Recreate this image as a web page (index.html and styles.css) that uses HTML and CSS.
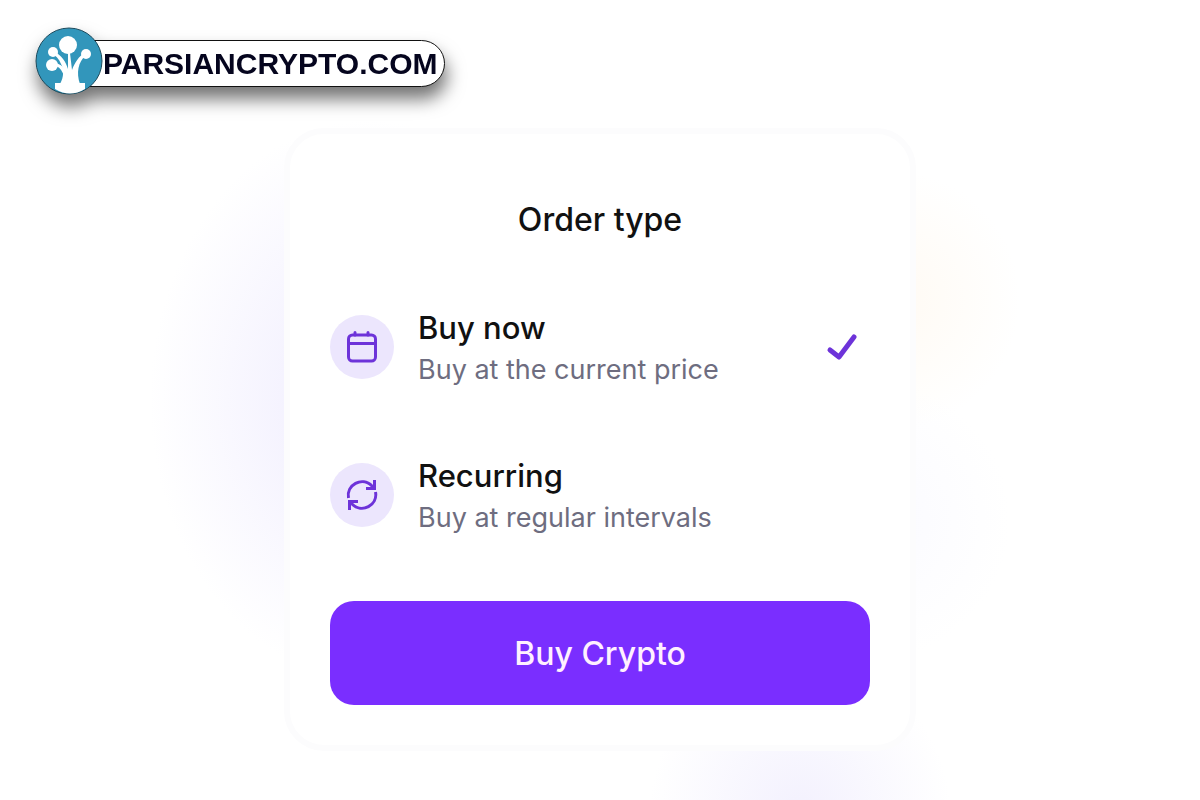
FILE: index.html
```
<!DOCTYPE html>
<html lang="en">
<head>
	<meta charset="utf-8">
	<meta name="viewport" content="width=device-width, initial-scale=1">
	<title>Order type</title>
	<link rel="stylesheet" href="styles.css">
</head>
<body>
	<header class="site-header">
		<a class="brand" href="#">
			<svg class="brand-logo" viewBox="0 0 68 68" aria-hidden="true">
				<circle cx="34" cy="34" r="33" fill="#3296bb" stroke="#1c4a5c" stroke-width="1"/>
				<path d="M20 56H50V62Q35 71 20 62Z" fill="#fff"/>
				<path d="M25 57C29 50 29 42 26 37C24 32 21 29 17 26L19 24C27 29 31 35 33 42L33 26H35L37 43C40 35 44 29 50 26L51 28C43 35 41 46 45 57Z" fill="#fff"/>
				<path d="M17 38C24 37 27 40 30 47" fill="none" stroke="#fff" stroke-width="3"/>
				<circle cx="33" cy="18" r="9" fill="#fff"/>
				<circle cx="18" cy="25" r="5" fill="#fff"/>
				<circle cx="17" cy="38" r="6" fill="#fff"/>
				<circle cx="51" cy="27" r="5" fill="#fff"/>
			</svg>
			<span class="brand-name">PARSIANCRYPTO.COM</span>
		</a>
	</header>

	<main>
		<form class="card">
			<h1 id="order-title">Order type</h1>

			<div class="options" role="radiogroup" aria-labelledby="order-title">
				<label class="option">
					<input type="radio" name="order" value="now" checked>
					<span class="option-icon">
						<svg viewBox="0 0 32 32" aria-hidden="true">
							<rect x="2.5" y="4" width="27" height="26" rx="4"/>
							<path d="M2.5 12.5H29.5M9 1.5V4M22 1.5V4"/>
						</svg>
					</span>
					<span class="option-text">
						<span class="option-name">Buy now</span>
						<span class="option-info">Buy at the current price</span>
					</span>
					<svg class="check" viewBox="0 0 32 32" aria-hidden="true"><path d="M4 19L13 26L28 6"/></svg>
				</label>

				<label class="option">
					<input type="radio" name="order" value="recurring">
					<span class="option-icon">
						<svg class="icon-repeat" viewBox="0 0 32 32" aria-hidden="true">
							<path d="M2.5 19C0 6 16 -3 26 7L28 9M28.5 1V9.5H20"/>
							<path d="M29.5 13C32 26 16 35 6 25L4 23M3.5 31V22.5H12"/>
						</svg>
					</span>
					<span class="option-text">
						<span class="option-name">Recurring</span>
						<span class="option-info">Buy at regular intervals</span>
					</span>
					<svg class="check" viewBox="0 0 32 32" aria-hidden="true"><path d="M4 19L13 26L28 6"/></svg>
				</label>
			</div>

			<button class="buy-btn" type="button">Buy Crypto</button>
		</form>
	</main>
</body>
</html>
```
FILE: styles.css
```
* {
	box-sizing: border-box;
}
body {
	margin: 0;
	min-height: 100vh;
	font-family: Inter, "Liberation Sans", sans-serif;
	color: #111;
	/* soft colour glows behind the card */
	background:
		radial-gradient(circle at 800px 810px, #f3f1fe, transparent 150px),
		radial-gradient(circle at 890px 300px, #fffaf3, transparent 130px),
		radial-gradient(circle at 870px 520px, #fafaff, transparent 140px),
		radial-gradient(220px 280px at 370px 400px, #eeebfe, transparent),
		#fff;
}

/* logo */
.site-header {
	display: flex;
	padding: 27px 35px 33px;
}
.brand {
	display: flex;
	align-items: center;
	color: #05051e;
	text-decoration: none;
	filter: drop-shadow(2px 12px 9px rgba(0, 0, 0, 0.55));
}
.brand-logo {
	position: relative;
	z-index: 1;
	width: 68px;
	height: 68px;
}
.brand-name {
	height: 47px;
	margin-top: 4px;
	margin-left: -24px;
	padding: 0 7px 0 23px;
	border: 1px solid #111;
	border-radius: 0 24px 24px 0;
	background: #fff;
	font: bold 30px/46px "Liberation Sans", Arial, sans-serif;
}

/* card */
main {
	display: flex;
	justify-content: center;
	padding: 0 16px 48px;
}
.card {
	width: 100%;
	max-width: 632px;
	padding: 66px 40px 40px;
	border: 6px solid #fcfcfd;
	border-radius: 40px;
	background: #fff;
}
h1 {
	margin: 0 0 64px;
	font-size: 32px;
	line-height: 40px;
	font-weight: 500;
	text-align: center;
}
.options {
	display: flex;
	flex-direction: column;
	gap: 62px;
	margin-bottom: 63px;
}
.option {
	position: relative;
	display: flex;
	align-items: center;
	gap: 24px;
	padding-right: 12px;
	cursor: pointer;
}
.option input {
	position: absolute;
	opacity: 0;
	margin: 0;
}
.option-icon {
	display: flex;
	flex: none;
	align-items: center;
	justify-content: center;
	width: 64px;
	height: 64px;
	border-radius: 50%;
	background: #ece6fd;
}
.option svg {
	width: 32px;
	height: 32px;
	fill: none;
	stroke: #6d33d9;
	stroke-width: 3;
	stroke-linecap: round;
	stroke-linejoin: round;
}
.option .icon-repeat {
	stroke-linecap: butt;
	stroke-linejoin: miter;
}
.option-text {
	display: flex;
	flex: 1;
	flex-direction: column;
	gap: 2px;
	padding-top: 4px;
}
.option-name {
	font-size: 31px;
	line-height: 40px;
	font-weight: 500;
}
.option-info {
	color: #6e6d80;
	font-size: 27px;
	line-height: 40px;
}
.option .check {
	flex: none;
	stroke-width: 5;
	visibility: hidden;
}
.option input:checked ~ .check {
	visibility: visible;
}
.option input:focus-visible ~ .option-icon {
	outline: 2px solid #7a2eff;
}
.buy-btn {
	display: block;
	width: 100%;
	padding: 33px 32px 31px;
	border: none;
	border-radius: 24px;
	background: #7a2eff;
	color: #fff0ff;
	font: 500 32px/40px Inter, "Liberation Sans", sans-serif;
	cursor: pointer;
}
```
